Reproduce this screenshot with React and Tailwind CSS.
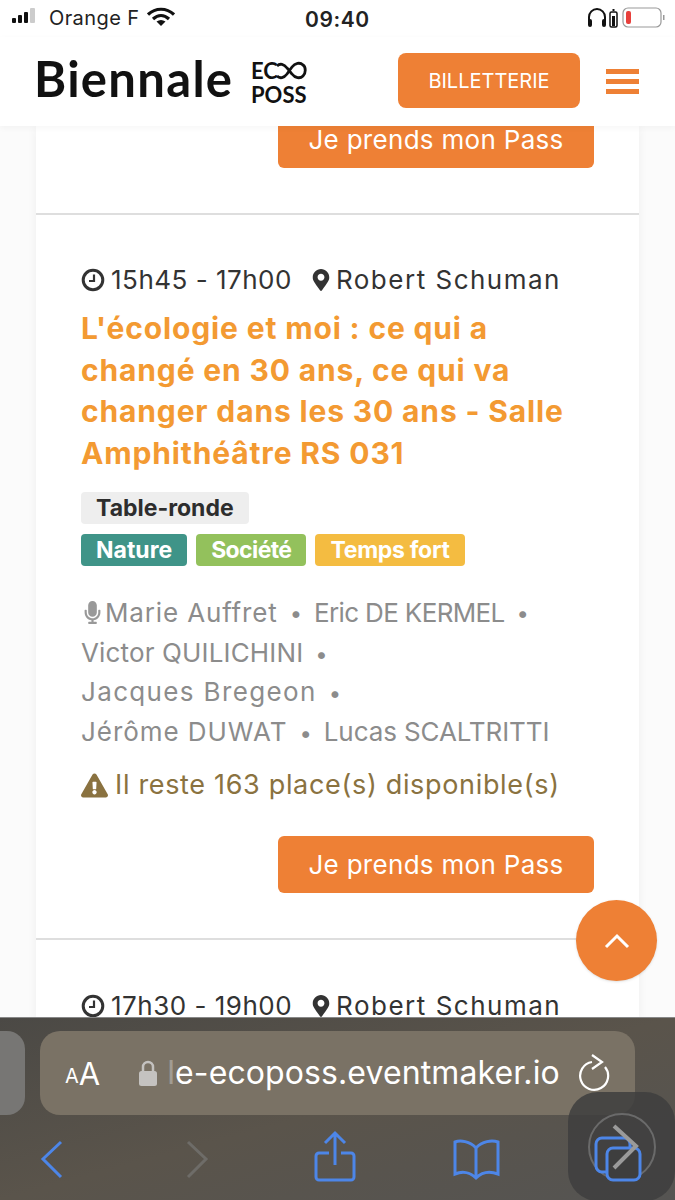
import { FaMapMarkerAlt, FaMicrophone, FaExclamationTriangle } from "react-icons/fa";

const titleLines = ["L'écologie et moi : ce qui a", "changé en 30 ans, ce qui va", "changer dans les 30 ans - Salle", "Amphithéâtre RS 031"];

function PassButton({ className = "" }) {
  return (
    <button className={`w-[316px] h-[57px] bg-[#ee8035] rounded-[6px] text-white text-[26px] tracking-[0.3px] ${className}`}>
      Je prends mon Pass
    </button>
  );
}

function Tag({ children, className }) {
  return <span className={`h-[32px] px-[15px] rounded-[4px] flex items-center text-[23px] font-bold ${className}`}>{children}</span>;
}

function Sep() {
  return <span className="mx-[12px] text-[22px] leading-none text-[#8c8c8c]">•</span>;
}

function StatusBar() {
  return (
    <div className="h-[37px] shrink-0 bg-white flex items-center relative text-[20px] text-[#222]">
      <svg width="30" height="20" viewBox="0 0 30 20" className="ml-[11px] mt-[-3px]">
        <rect x="1" y="11" width="4" height="5" rx="1" fill="#111" />
        <rect x="7" y="8" width="4" height="8" rx="1" fill="#111" />
        <rect x="13" y="5" width="4" height="11" rx="1" fill="#111" />
        <rect x="19" y="1" width="5" height="15" rx="1" fill="#ccc" />
      </svg>
      <span className="ml-[8px] mt-[-1px] tracking-[0.4px]">Orange F</span>
      <svg width="28" height="20" viewBox="0 0 28 20" className="ml-[8px] mt-[-3px]" fill="none" stroke="#111" strokeWidth="3.200">
        <path d="M1 7.500C8.500 0.500 19.500 0.500 27 7.500" />
        <path d="M6 12C11 7.500 17 7.500 22 12" />
        <path d="M14 19L9.500 14.500C12.500 12.500 15.500 12.500 18.500 14.500Z" fill="#111" stroke="none" />
      </svg>
      <span className="absolute left-[305px] top-[4px] text-[21px] font-semibold tracking-[0.6px]">09:40</span>
      <svg width="84" height="24" viewBox="0 0 84 24" className="absolute left-[586px] top-[5px]" fill="none">
        <path d="M3 18V12a8 8 0 0 1 16 0v6" stroke="#111" strokeWidth="2" />
        <rect x="2" y="14" width="4" height="8" rx="2" fill="#111" />
        <rect x="16" y="14" width="4" height="8" rx="2" fill="#111" />
        <rect x="24" y="7" width="7" height="15" rx="1.500" stroke="#111" strokeWidth="1.500" />
        <rect x="26" y="11" width="3" height="10" fill="#111" />
        <rect x="26.500" y="4" width="2" height="2" fill="#111" />
        <rect x="37" y="3" width="38" height="19" rx="5" stroke="#999" strokeWidth="1.200" />
        <rect x="40" y="6" width="5" height="13" rx="2" fill="#e8403c" />
        <rect x="77" y="10" width="1.500" height="5" fill="#999" />
      </svg>
    </div>
  );
}

function Header() {
  return (
    <div className="h-[89px] shrink-0 bg-white flex items-start relative z-10 shadow-[0_2px_6px_rgba(0,0,0,0.04)]">
      <span className="ml-[34px] mt-[13px] w-[200px] text-[49px] leading-[56px] font-bold text-[#111] tracking-[1.3px]" style={{ fontFamily: "Lato, sans-serif" }}>Biennale</span>
      <div className="ml-[17px] mt-[23px] w-[58px] text-[#111] text-[22px] font-bold" style={{ fontFamily: "Lato, sans-serif" }}>
        <div className="flex items-center h-[22px] leading-[22px]">
          <span>EC</span>
          <svg width="33" height="20" viewBox="0 0 33 20" fill="none" stroke="#111" strokeWidth="2.800" className="ml-[-4px]">
            <path d="M3 5C6 2 10 3 13 7L18 13C21 17 26 18 29 15C32 12 32 6 29 4C26 1 21 2 18 6L13 13C10 17 6 18 3 15" />
          </svg>
        </div>
        <div className="mt-[2px] leading-[22px]">POSS</div>
      </div>
      <button className="absolute left-[398px] top-[16px] w-[182px] h-[55px] bg-[#ee8035] rounded-[8px] text-white text-[20px]">BILLETTERIE</button>
      <div className="absolute left-[606px] top-[32px] w-[33px] h-[25px] flex flex-col justify-between">
        <div className="h-[5px] bg-[#ee8035]" />
        <div className="h-[5px] bg-[#ee8035]" />
        <div className="h-[5px] bg-[#ee8035]" />
      </div>
    </div>
  );
}

function ClockIcon() {
  return (
    <svg width="24" height="24" viewBox="0 0 24 24" fill="none" stroke="#333" className="mr-[6px] shrink-0">
      <circle cx="12" cy="12" r="9.800" strokeWidth="3" />
      <path d="M13 6.500V13H8" strokeWidth="2.200" />
    </svg>
  );
}

function TimeRow({ time, room }) {
  return (
    <div className="flex items-center h-[30px] text-[26px] leading-[30px] text-[#333] whitespace-nowrap">
      <ClockIcon />
      <span className="tracking-[0.5px]">{time}</span>
      <FaMapMarkerAlt className="text-[22px] ml-[18px] mr-[4px] shrink-0" />
      <span className="tracking-[1.5px]">{room}</span>
    </div>
  );
}

function BottomBar() {
  return (
    <div className="h-[183px] shrink-0 relative bg-gradient-to-br from-[#4b4945] via-[#5a544b] to-[#555452] border-t border-[#888] text-white">
      <div className="absolute left-[-20px] top-[13px] w-[45px] h-[84px] rounded-[18px] bg-[#777674]" />
      <div className="absolute left-[40px] top-[13px] w-[595px] h-[84px] rounded-[20px] bg-[#7a7265] flex items-center">
        <span className="ml-[25px] text-[20px] leading-none mt-[6px]">A</span>
        <span className="text-[31px] leading-none">A</span>
        <svg width="20" height="26" viewBox="0 0 20 26" className="ml-[38px]" fill="none">
          <path d="M5 12V7a5 5 0 0 1 10 0v5" stroke="#c4c2c0" strokeWidth="2.500" />
          <rect x="1" y="11" width="18" height="15" rx="2.500" fill="#c4c2c0" />
        </svg>
        <span className="ml-[9px] text-[32px] tracking-[0.1px] whitespace-nowrap"><span className="opacity-30">l</span>e-ecoposs.eventmaker.io</span>
        <svg width="32" height="38" viewBox="0 0 32 38" className="ml-auto mr-[25px]" fill="none" stroke="#fff" strokeWidth="2.200">
          <path d="M14 8A14 14 0 1 0 27 13" />
          <path d="M14 1L24 8L14 15" />
        </svg>
      </div>
      <svg width="675" height="83" viewBox="0 0 675 83" className="absolute left-0 top-[100px]" fill="none" strokeWidth="3">
        <path d="M61 24L43 41L61 59" stroke="#4d86e8" />
        <path d="M188 24L206 41L188 59" stroke="#6e6c68" />
        <path d="M329 35H319a3 3 0 0 0-3 3V59a3 3 0 0 0 3 3H351a3 3 0 0 0 3-3V38a3 3 0 0 0-3-3H341M335 47V16M325 25L335 15L345 25" stroke="#4d86e8" />
        <path d="M476 30C470 23 460 22 455 24V56C462 53 470 54 476 60C482 54 490 53 498 56V24C492 22 482 23 476 30ZM476 30V58" stroke="#4d86e8" />
      </svg>
      <div className="absolute left-[568px] top-[74px] w-[107px] h-[109px] rounded-[30px] bg-[#3e3e3e]/85 flex items-center justify-center">
        <div className="w-[68px] h-[68px] rounded-full border-2 border-[#6a6a6a]" />
      </div>
      <svg width="675" height="83" viewBox="0 0 675 83" className="absolute left-0 top-[100px]" fill="none" strokeWidth="3">
        <rect x="596" y="20" width="34" height="34" rx="6" stroke="#4d86e8" />
        <rect x="607" y="30" width="33" height="32" rx="6" stroke="#4d86e8" fill="#3e3e3e" />
        <path d="M614 8L636 28L614 50" stroke="#9a9a9a" strokeWidth="4" />
      </svg>
    </div>
  );
}

export default function App() {
  return (
    <div className="w-[675px] h-[1200px] relative overflow-hidden flex flex-col bg-white" style={{ fontFamily: "Inter, sans-serif" }}>
      <StatusBar />
      <Header />
      <div className="flex-1 min-h-0 overflow-hidden bg-[#fbfbfb]">
        <div className="mx-[36px] w-[603px] bg-white shadow-[0_0_10px_rgba(0,0,0,0.05)]">
          <div className="h-[89px] border-b-2 border-[#dedede] flex justify-end pr-[45px] items-start">
            <PassButton className="-mt-[15px]" />
          </div>
          <div className="h-[725px] border-b-2 border-[#dedede] pl-[45px] pt-[50px]">
            <TimeRow time="15h45 - 17h00" room="Robert Schuman" />
            <div className="mt-[13px] text-[#f39a32] text-[30px] leading-[41.500px] font-bold tracking-[0.85px]">
              {titleLines.map((line) => (
                <div key={line} className="whitespace-nowrap">{line}</div>
              ))}
            </div>
            <div className="mt-[18px] flex">
              <Tag className="bg-[#eeeeee] text-[#2d2d2d]">Table-ronde</Tag>
            </div>
            <div className="mt-[10px] flex gap-[9px] text-white">
              <Tag className="bg-[#3f9488]">Nature</Tag>
              <Tag className="bg-[#93c15c] tracking-[-0.6px]">Société</Tag>
              <Tag className="bg-[#f4bc41] tracking-[-0.3px]">Temps fort</Tag>
            </div>
            <div className="mt-[27px] text-[26px] leading-[39.500px] text-[#8c8c8c]">
              <div className="flex items-center whitespace-nowrap">
                <FaMicrophone className="text-[23px] shrink-0 mr-[1px] text-[#999]" />
                <span className="tracking-[0.85px]">Marie Auffret</span>
                <Sep />
                <span className="tracking-[-0.65px]">Eric DE KERMEL</span>
                <Sep />
              </div>
              <div className="whitespace-nowrap"><span className="tracking-[0.15px]">Victor QUILICHINI</span><Sep /></div>
              <div className="whitespace-nowrap"><span className="tracking-[1.35px]">Jacques Bregeon</span><Sep /></div>
              <div className="whitespace-nowrap">
                <span className="tracking-[0.95px]">Jérôme DUWAT</span>
                <Sep />
                <span className="tracking-[-0.1px]">Lucas SCALTRITTI</span>
              </div>
            </div>
            <div className="mt-[19px] flex items-center h-[31px] text-[27px] text-[#8a7240] tracking-[0.67px] whitespace-nowrap">
              <FaExclamationTriangle className="text-[27px] mr-[7px] shrink-0" />
              Il reste 163 place(s) disponible(s)
            </div>
            <div className="mt-[35px] flex justify-end pr-[45px]">
              <PassButton />
            </div>
          </div>
          <div className="pl-[45px] pt-[51px]">
            <TimeRow time="17h30 - 19h00" room="Robert Schuman" />
          </div>
        </div>
      </div>
      <BottomBar />
      <button className="absolute left-[576px] top-[900px] w-[81px] h-[81px] rounded-full bg-[#ee8035] flex items-center justify-center shadow-sm">
        <svg width="28" height="16" viewBox="0 0 28 16" fill="none" stroke="#fff" strokeWidth="3">
          <path d="M3 14L14 3L25 14" />
        </svg>
      </button>
    </div>
  );
}
